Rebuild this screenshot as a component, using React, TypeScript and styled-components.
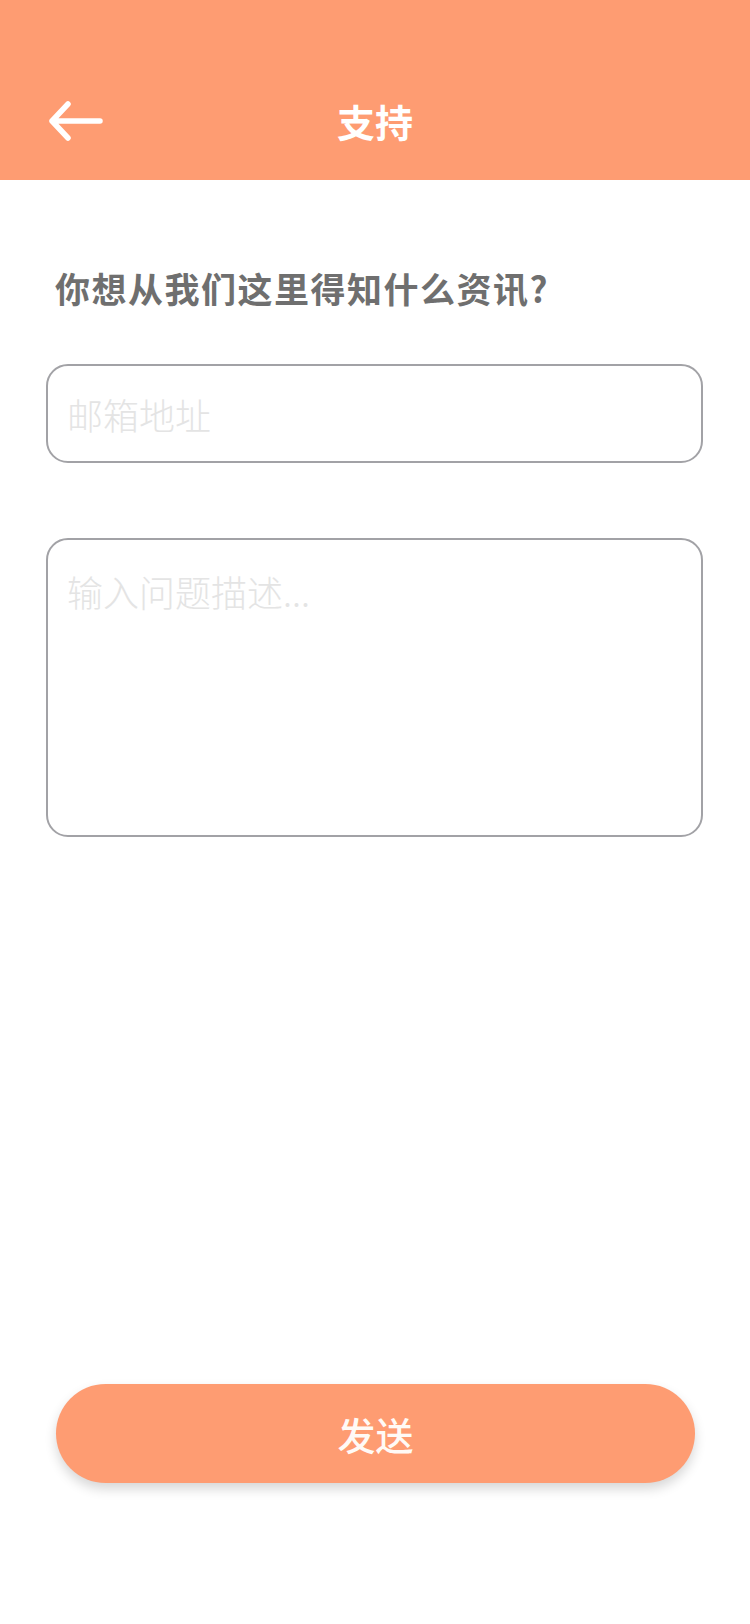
import styled, { createGlobalStyle } from "styled-components";

const GlobalStyle = createGlobalStyle`
  html, body {
    margin: 0;
    padding: 0;
    background: #ffffff;
  }
  body {
    font-family: "Noto Sans CJK SC", "Noto Sans", sans-serif;
  }
  * {
    box-sizing: border-box;
  }
`;

const ORANGE = "#fe9c72";

const ArrowIcon = () => (
  <svg width="54" height="44" viewBox="0 0 54 44" fill="none">
    <path
      d="M3 22 H51 M19 5 L3 22 L19 39"
      stroke="#ffffff"
      strokeWidth="5.5"
      strokeLinecap="round"
      strokeLinejoin="round"
    />
  </svg>
);

export default function App() {
  return (
    <Page>
      <GlobalStyle />
      <Header>
        <BackButton aria-label="back">
          <ArrowIcon />
        </BackButton>
        <Title>支持</Title>
        <span />
      </Header>
      <Content>
        <Question>你想从我们这里得知什么资讯?</Question>
        <Field placeholder="邮箱地址" />
        <Area placeholder="输入问题描述..." />
      </Content>
      <Footer>
        <SendButton>发送</SendButton>
      </Footer>
    </Page>
  );
}

const Page = styled.div`
  min-height: 100vh;
  display: flex;
  flex-direction: column;
  background: #ffffff;
`;

const Header = styled.header`
  height: 180px;
  padding-top: 62px;
  background: ${ORANGE};
  display: grid;
  grid-template-columns: 1fr auto 1fr;
  align-items: center;
`;

const BackButton = styled.button`
  justify-self: start;
  margin-left: 49px;
  padding: 0;
  border: none;
  background: none;
  display: flex;
  align-items: center;
  cursor: pointer;
`;

const Title = styled.h1`
  margin: 0;
  color: #ffffff;
  font-size: 38px;
  font-weight: 700;
  line-height: 1;
`;

const Content = styled.main`
  padding: 84px 47px 0 46px;
  display: flex;
  flex-direction: column;
`;

const Question = styled.h2`
  margin: 0 0 52px 9px;
  color: #6f6f6f;
  font-size: 35px;
  font-weight: 600;
  letter-spacing: 1.5px;
  line-height: 48px;
`;

const inputBase = `
  width: 100%;
  border: 2px solid #a2a2a6;
  border-radius: 22px;
  background: #ffffff;
  font-family: "Noto Sans CJK SC", "Noto Sans", sans-serif;
  font-size: 36px;
  font-weight: 300;
  color: #333333;
  outline: none;
  &::placeholder {
    color: #e4e4e4;
  }
`;

const Field = styled.input`
  ${inputBase}
  height: 99px;
  padding: 0 19px;
`;

const Area = styled.textarea`
  ${inputBase}
  margin-top: 75px;
  height: 299px;
  padding: 28px 19px;
  line-height: 1.3;
  resize: none;
`;

const Footer = styled.footer`
  margin-top: auto;
  padding: 0 55px 141px 56px;
`;

const SendButton = styled.button`
  width: 100%;
  height: 99px;
  border: none;
  border-radius: 50px;
  background: ${ORANGE};
  color: #fffaf6;
  font-family: "Noto Sans CJK SC", "Noto Sans", sans-serif;
  font-size: 38px;
  font-weight: 500;
  box-shadow: 0 6px 12px rgba(0, 0, 0, 0.16);
  cursor: pointer;
`;
